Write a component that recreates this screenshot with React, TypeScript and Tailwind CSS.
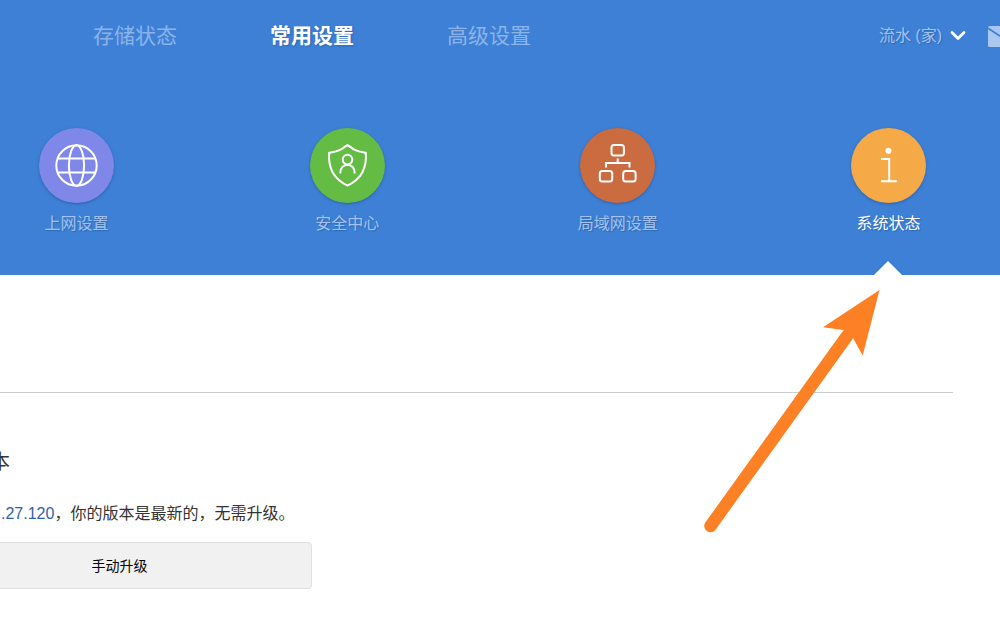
import type { ReactNode } from 'react';

type Category = {
  label: string;
  color: string;
  icon: ReactNode;
  active?: boolean;
};

const tabs = [
  { label: '存储状态', active: false },
  { label: '常用设置', active: true },
  { label: '高级设置', active: false },
];

const categories: Category[] = [
  {
    label: '上网设置',
    color: 'bg-[#7f88e8]',
    icon: (
      <>
        <circle cx="37.5" cy="37.5" r="20.2" />
        <ellipse cx="37.5" cy="37.5" rx="7.6" ry="20.2" />
        <path d="M19 30.5h37M19 44.5h37" />
      </>
    ),
  },
  {
    label: '安全中心',
    color: 'bg-[#65bc45]',
    icon: (
      <>
        <path d="M37.5 17.2C40 18.2 42 20.6 45.5 22.2C48.8 23.8 52.5 24.2 55.8 24.8C56.4 31 55.5 38 52.3 44.5C49.2 50.5 42.5 55.8 37.5 57.5C32.5 55.8 25.8 50.5 22.7 44.5C19.5 38 18.6 31 19.2 24.8C22.5 24.2 26.2 23.8 29.5 22.2C33 20.6 35 18.2 37.5 17.2Z" />
        <circle cx="37.5" cy="31.6" r="4.8" />
        <path d="M30.4 45.5v-1.2a7.1 7.6 0 0 1 14.2 0v1.2" />
      </>
    ),
  },
  {
    label: '局域网设置',
    color: 'bg-[#cb6b40]',
    icon: (
      <>
        <rect x="31.5" y="17" width="12.4" height="10.6" rx="2.5" />
        <rect x="19.8" y="43" width="12.4" height="10.6" rx="2.5" />
        <rect x="43.2" y="43" width="12.4" height="10.6" rx="2.5" />
        <path d="M37.7 30.5v4.5M26 39.6v-4.6h23.5v4.6" />
      </>
    ),
  },
  {
    label: '系统状态',
    color: 'bg-[#f5a947]',
    active: true,
    icon: (
      <>
        <circle cx="37.4" cy="22.8" r="3" fill="white" stroke="none" />
        <path d="M30 31h8.2v22M30 53.2h16" />
      </>
    ),
  },
];

export default function App() {
  return (
    <div
      lang="zh-CN"
      className="relative min-h-screen overflow-hidden bg-white font-['Liberation_Sans','Noto_Sans_CJK_SC',sans-serif] text-[#333]"
    >
      <header className="bg-[#3d80d6]">
        <div className="flex h-[72px] items-center justify-between pl-[93px]">
          <nav className="flex gap-[93px]">
            {tabs.map((tab) => (
              <a
                key={tab.label}
                href="#"
                className={
                  tab.active
                    ? 'text-[21px] leading-8 font-bold whitespace-nowrap text-white [text-shadow:1px_1px_2px_#1f4f9580]'
                    : 'text-[21px] leading-8 whitespace-nowrap text-[#8cb4ea]'
                }
              >
                {tab.label}
              </a>
            ))}
          </nav>
          <div className="flex items-center">
            <button
              type="button"
              className="flex items-center gap-2 text-base text-[#a3c3ee] [text-shadow:1px_1px_1px_#1f4f9580]"
            >
              流水 (家)
              <svg width="16" height="12" viewBox="0 0 16 12" fill="none" aria-hidden="true">
                <path d="M2 2.5l6 6 6-6" stroke="white" strokeWidth="2.8" strokeLinecap="round" strokeLinejoin="round" />
              </svg>
            </button>
            <a href="#" aria-label="消息" className="-mr-4 ml-[22px]">
              <svg width="28" height="22" viewBox="0 0 28 22" fill="none" aria-hidden="true">
                <rect y="1" width="28" height="21" rx="1.5" fill="#a9c7ef" />
                <path d="M0 3.2l11.500 7.500q2.500 1.300 5 0L28 3.200" stroke="#3d80d6" strokeWidth="1.8" />
              </svg>
            </a>
          </div>
        </div>

        <nav className="flex justify-between pt-14 pr-[74px] pl-[39px]">
          {categories.map((category) => (
            <a
              key={category.label}
              href="#"
              className="relative flex w-[75px] flex-col items-center gap-[9px] pb-[39px]"
            >
              <span className={`size-[75px] rounded-full shadow-[0_1px_3px_#1f4f9599] ${category.color}`}>
                <svg
                  width="75"
                  height="75"
                  viewBox="0 0 75 75"
                  fill="none"
                  stroke="white"
                  strokeWidth="2"
                  aria-hidden="true"
                >
                  {category.icon}
                </svg>
              </span>
              <span
                className={
                  category.active
                    ? 'text-base leading-6 whitespace-nowrap text-white [text-shadow:1px_1px_1px_#1f4f9599]'
                    : 'text-base leading-6 whitespace-nowrap text-[#a3c3ee] [text-shadow:1px_1px_1px_#1f4f9580]'
                }
              >
                {category.label}
              </span>
              {category.active && (
                <svg
                  className="absolute bottom-0 left-1/2 -translate-x-1/2"
                  width="28"
                  height="14"
                  viewBox="0 0 28 14"
                  aria-hidden="true"
                >
                  <path d="M0 14L14 0l14 14z" fill="white" />
                </svg>
              )}
            </a>
          ))}
        </nav>
      </header>

      <main className="relative">
        <hr className="mr-[47px] border-0 border-b border-[#ccc] pt-[117px]" />
        <section className="pt-[53px]">
          <h2 className="-ml-[10px] text-xl leading-8 font-normal">本</h2>
          <p className="mt-5 pl-px text-base leading-8">
            <a href="#" className="text-[#2f62a3]">.27.120</a>，你的版本是最新的，无需升级。
          </p>
          <button
            type="button"
            className="mt-3 -ml-[73px] h-[47px] w-[385px] rounded-[4px] border border-[#e0e0e0] bg-[#f1f1f1] text-sm text-black"
          >
            手动升级
          </button>
        </section>

        <svg
          className="pointer-events-none absolute top-[5px] right-[110px]"
          width="190"
          height="260"
          viewBox="0 0 190 260"
          aria-hidden="true"
        >
          <path d="M10.5 246L147 56" stroke="#fd8124" strokeWidth="12.5" strokeLinecap="round" />
          <path d="M179.5 10L123 47.3 143 50 153 58 162.7 75.5z" fill="#fd8124" />
        </svg>
      </main>
    </div>
  );
}
